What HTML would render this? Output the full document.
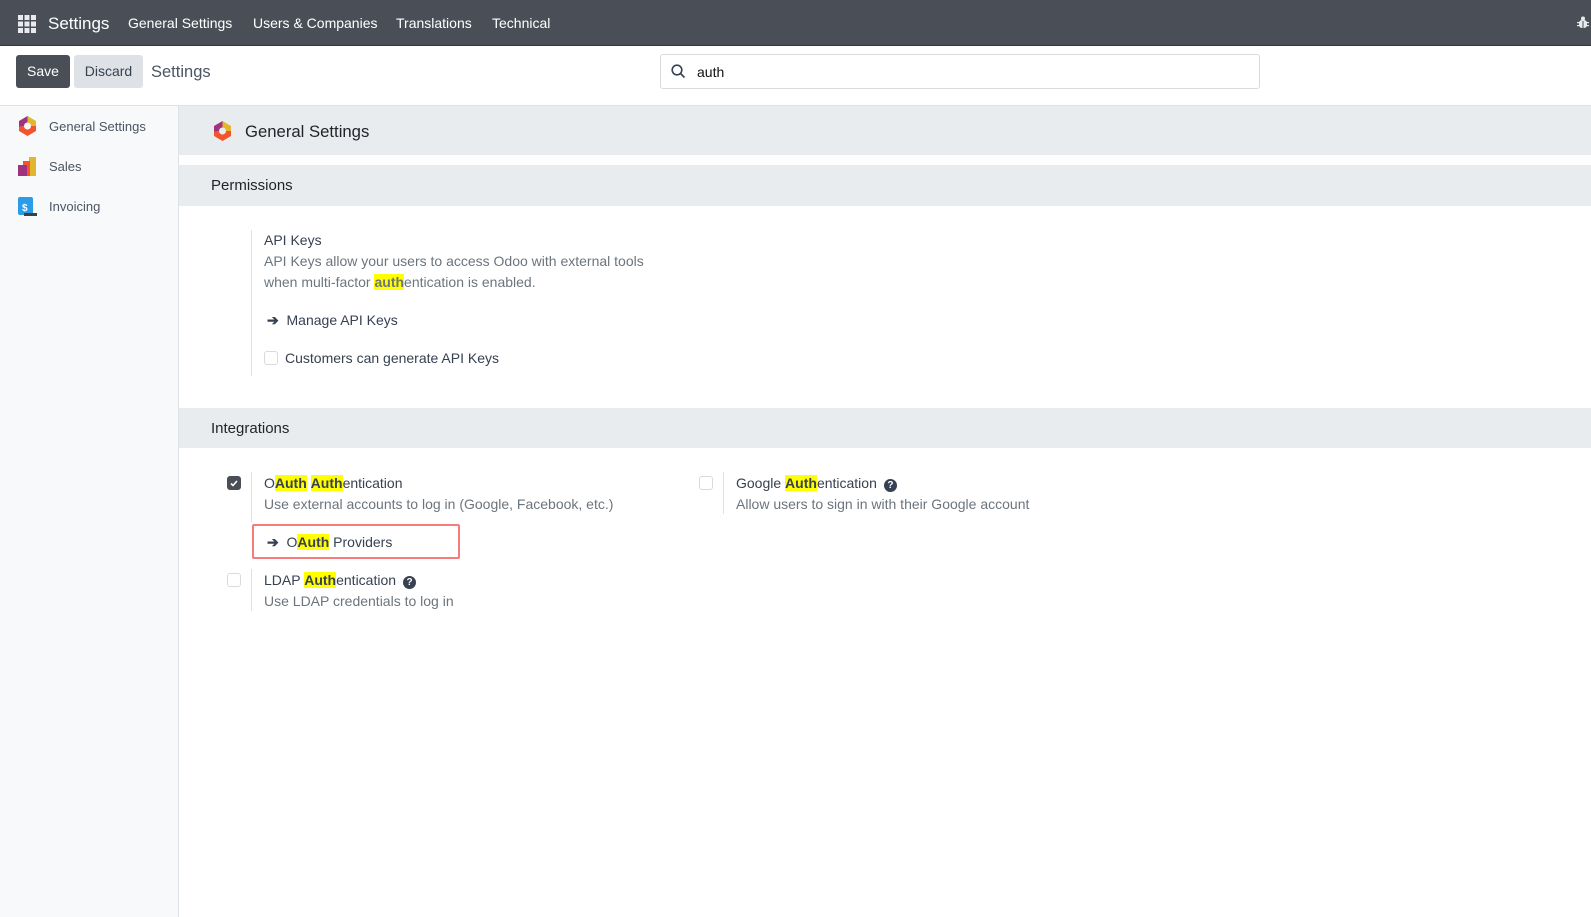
<!DOCTYPE html>
<html><head><meta charset="utf-8"><style>
*{box-sizing:border-box;margin:0;padding:0}
body{width:1591px;height:917px;overflow:hidden;font-family:"Liberation Sans",sans-serif;font-size:14px;color:#374151;background:#fff;position:relative}
.abs{position:absolute}
.nav{left:0;top:0;width:1591px;height:46px;background:#4a4f57;border-bottom:1px solid #33373c}
.nav span{position:absolute;color:#fff;top:15px;font-size:14px}
.btn{position:absolute;top:55px;height:33px;border-radius:3px;font-size:14px;line-height:33px;text-align:center}
.hl{background:#ffff00;font-weight:bold;color:#374151}
.muted{color:#6c757d}
.band{position:absolute;left:179px;width:1412px;background:#e9ecef}
.cb{position:absolute;width:14px;height:14px;border:1px solid #d8dadd;border-radius:3px;background:#fff}
.vl{position:absolute;width:1px;background:#dee2e6}
.q{display:inline-block;width:13px;height:13px;border-radius:50%;background:#374151;color:#fff;font-size:10px;font-weight:bold;text-align:center;line-height:13px;vertical-align:0px;margin-left:7px}
</style></head><body>
<div class="abs nav">
 <svg class="abs" style="left:18px;top:15px" width="18" height="18" viewBox="0 0 18 18" fill="#e8eaed"><rect x="0" y="0" width="5" height="5"/><rect x="6.5" y="0" width="5" height="5"/><rect x="13" y="0" width="5" height="5"/><rect x="0" y="6.5" width="5" height="5"/><rect x="6.5" y="6.5" width="5" height="5"/><rect x="13" y="6.5" width="5" height="5"/><rect x="0" y="13" width="5" height="5"/><rect x="6.5" y="13" width="5" height="5"/><rect x="13" y="13" width="5" height="5"/></svg>
 <span style="left:48px;top:14px;font-size:17px">Settings</span>
 <span style="left:128px">General Settings</span>
 <span style="left:253px">Users &amp; Companies</span>
 <span style="left:396px">Translations</span>
 <span style="left:492px">Technical</span>
 <svg class="abs" style="left:1577px;top:16px" width="12" height="13" viewBox="0 0 12 13" fill="#e8eaed"><circle cx="6" cy="2.5" r="2"/><rect x="2" y="4" width="8" height="8" rx="3"/><rect x="0" y="6" width="12" height="1.2"/><rect x="0" y="9" width="12" height="1.2"/><rect x="5.5" y="5" width="1" height="7" fill="#4a4f57"/></svg>
</div>
<div class="btn" style="left:16px;width:54px;background:#4a4f57;color:#fff">Save</div>
<div class="btn" style="left:74px;width:69px;background:#dee2e6;color:#374151">Discard</div>
<div class="abs" style="left:151px;top:63px;font-size:16.5px;color:#4b5563">Settings</div>
<div class="abs" style="left:660px;top:54px;width:600px;height:35px;border:1px solid #d8dadd;border-radius:3px"></div>
<svg class="abs" style="left:671px;top:64px" width="15" height="15" viewBox="0 0 15 15" fill="none" stroke="#374151" stroke-width="1.6"><circle cx="6" cy="6" r="4.8"/><path d="M9.5 9.5l4 4"/></svg>
<div class="abs" style="left:697px;top:64px;color:#111">auth</div>
<div class="abs" style="left:0;top:105px;width:1591px;height:1px;background:#dee2e6"></div>
<div class="abs" style="left:0;top:106px;width:179px;height:811px;background:#f8f9fa;border-right:1px solid #dee2e6"></div>
<svg class="abs" style="left:18px;top:116px" width="19" height="20" viewBox="0 0 19 20"><path d="M9.5 0L18 5v5h-5a3.5 3.5 0 0 0-3.5-3.5z" fill="#e2b72e"/><path d="M9.5 0L1 5v6l5 -1a3.5 3.5 0 0 1 3.5-3.5z" fill="#a1327e"/><path d="M1 11v4l8.5 5 8.5-5v-5h-5a3.5 3.5 0 0 1-7 0z" fill="#f2542d"/></svg>
<div class="abs" style="left:49px;top:119px;font-size:13px;color:#4b5563">General Settings</div>
<svg class="abs" style="left:18px;top:157px" width="19" height="20" viewBox="0 0 19 20"><rect x="11" y="0" width="7" height="19" fill="#e2b72e"/><rect x="5" y="4" width="7" height="15" fill="#f2542d"/><rect x="0" y="8" width="9" height="11" fill="#a1327e"/></svg>
<div class="abs" style="left:49px;top:159px;font-size:13px;color:#4b5563">Sales</div>
<svg class="abs" style="left:18px;top:197px" width="20" height="20" viewBox="0 0 20 20"><rect x="0" y="0" width="15" height="18" rx="2" fill="#2c9be8"/><rect x="6" y="16" width="13" height="3" fill="#3b3f46"/><text x="4" y="14" font-size="10" font-weight="bold" fill="#fff" font-family="Liberation Sans">$</text></svg>
<div class="abs" style="left:49px;top:199px;font-size:13px;color:#4b5563">Invoicing</div>

<div class="band" style="top:106px;height:49px"></div>
<svg class="abs" style="left:213px;top:121px" width="19" height="20" viewBox="0 0 19 20"><path d="M9.5 0L18 5v5h-5a3.5 3.5 0 0 0-3.5-3.5z" fill="#e2b72e"/><path d="M9.5 0L1 5v6l5 -1a3.5 3.5 0 0 1 3.5-3.5z" fill="#a1327e"/><path d="M1 11v4l8.5 5 8.5-5v-5h-5a3.5 3.5 0 0 1-7 0z" fill="#f2542d"/></svg>
<div class="abs" style="left:245px;top:122px;font-size:16.7px;color:#212529">General Settings</div>
<div class="band" style="top:165px;height:41px"></div>
<div class="abs" style="left:211px;top:177px;font-size:15px;color:#212529">Permissions</div>

<div class="vl" style="left:251px;top:230px;height:146px"></div>
<div class="abs" style="left:264px;top:232px">API Keys</div>
<div class="abs muted" style="left:264px;top:251px;line-height:21px">API Keys allow your users to access Odoo with external tools<br>when multi-factor <span class="hl" style="color:#6c757d">auth</span>entication is enabled.</div>
<div class="abs" style="left:267px;top:312px"><b>➔</b>&nbsp; Manage API Keys</div>
<div class="cb" style="left:264px;top:351px"></div>
<div class="abs" style="left:285px;top:350px">Customers can generate API Keys</div>

<div class="band" style="top:408px;height:40px"></div>
<div class="abs" style="left:211px;top:420px;font-size:15px;color:#212529">Integrations</div>

<div class="cb" style="left:227px;top:476px;background:#4a4f57;border-color:#4a4f57"></div>
<svg class="abs" style="left:230px;top:480px" width="8" height="7" viewBox="0 0 8 7" fill="none" stroke="#fff" stroke-width="1.6"><path d="M1 3.5l2 2 4-4.5"/></svg>
<div class="vl" style="left:251px;top:472px;height:50px"></div>
<div class="abs" style="left:264px;top:475px">O<span class="hl">Auth</span> <span class="hl">Auth</span>entication</div>
<div class="abs muted" style="left:264px;top:496px">Use external accounts to log in (Google, Facebook, etc.)</div>
<div class="abs" style="left:252px;top:524px;width:208px;height:35px;border:2px solid #f77b7b;border-radius:2px"></div>
<div class="abs" style="left:267px;top:534px"><b>➔</b>&nbsp; O<span class="hl">Auth</span> Providers</div>

<div class="cb" style="left:227px;top:573px"></div>
<div class="vl" style="left:251px;top:569px;height:42px"></div>
<div class="abs" style="left:264px;top:572px">LDAP <span class="hl">Auth</span>entication<span class="q">?</span></div>
<div class="abs muted" style="left:264px;top:593px">Use LDAP credentials to log in</div>

<div class="cb" style="left:699px;top:476px"></div>
<div class="vl" style="left:723px;top:472px;height:42px"></div>
<div class="abs" style="left:736px;top:475px">Google <span class="hl">Auth</span>entication<span class="q">?</span></div>
<div class="abs muted" style="left:736px;top:496px">Allow users to sign in with their Google account</div>
</body></html>
